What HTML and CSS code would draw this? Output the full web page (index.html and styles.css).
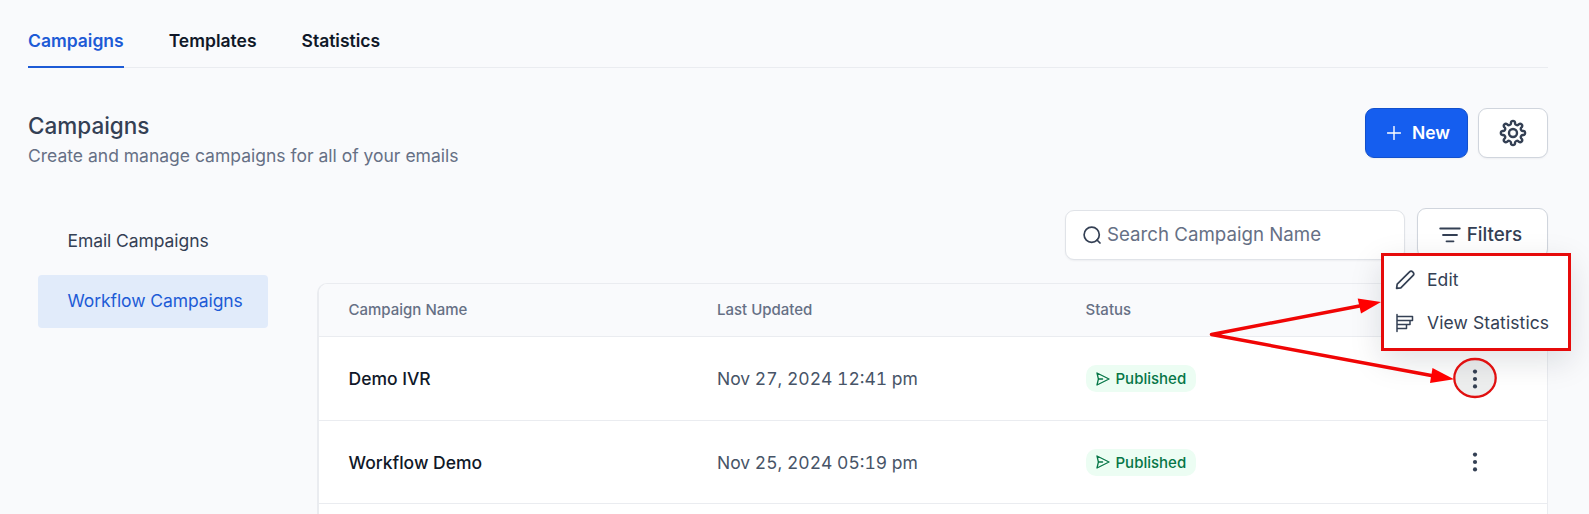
FILE: index.html
```html
<!DOCTYPE html>
<html lang="en">

<head>
    <meta charset="utf-8">
    <meta name="viewport" content="width=device-width, initial-scale=1.0">
    <title>Campaigns</title>
    <link rel="stylesheet" href="styles.css">
</head>

<body>
    <main>
        <nav class="tabs">
            <a class="tab active">Campaigns</a>
            <a class="tab">Templates</a>
            <a class="tab">Statistics</a>
        </nav>

        <header class="page-header">
            <div>
                <h1>Campaigns</h1>
                <p class="subtitle">Create and manage campaigns for all of your emails</p>
            </div>
            <div class="actions">
                <button class="btn btn-new">
                    <svg width="14" height="14" viewBox="0 0 14 14"><path d="M7 .5v13M.5 7h13" stroke-width="1.4" /></svg>
                    <span>New</span>
                </button>
                <button class="btn btn-settings">
                    <svg width="30" height="30" viewBox="-15 -15 30 30" stroke-width="2.4"><path d="M10.400-2.070A2.100 2.100 0 0 1 10.400 2.070A2.100 2.100 0 0 0 8.810 5.890A2.100 2.100 0 0 1 5.890 8.810A2.100 2.100 0 0 0 2.070 10.400A2.100 2.100 0 0 1-2.070 10.400A2.100 2.100 0 0 0-5.890 8.810A2.100 2.100 0 0 1-8.810 5.890A2.100 2.100 0 0 0-10.400 2.070A2.100 2.100 0 0 1-10.400-2.070A2.100 2.100 0 0 0-8.810-5.890A2.100 2.100 0 0 1-5.890-8.810A2.100 2.100 0 0 0-2.070-10.400A2.100 2.100 0 0 1 2.070-10.400A2.100 2.100 0 0 0 5.890-8.810A2.100 2.100 0 0 1 8.810-5.890A2.100 2.100 0 0 0 10.400-2.070z" /><circle r="4" /></svg>
                </button>
            </div>
        </header>

        <div class="content">
            <aside class="sidebar">
                <a class="side-link">Email Campaigns</a>
                <a class="side-link selected">Workflow Campaigns</a>
            </aside>

            <section class="list">
                <div class="toolbar">
                    <div class="search">
                        <svg width="18" height="18" viewBox="0 0 18 18" stroke-width="1.7"><circle cx="8.7" cy="8.7" r="7.6" /><path d="M14 14l3 3" /></svg>
                        <span>Search Campaign Name</span>
                    </div>
                    <button class="btn btn-filters">
                        <svg width="22" height="16" viewBox="0 0 22 16" stroke-width="1.8"><path d="M1.200 1.500h19.600M4 8h14M7.500 14.300h7" /></svg>
                        <span>Filters</span>
                    </button>
                </div>

                <div class="table">
                    <div class="row head">
                        <div>Campaign Name</div>
                        <div>Last Updated</div>
                        <div>Status</div>
                        <div></div>
                    </div>
                    <div class="row">
                        <div class="name">Demo IVR</div>
                        <div class="date">Nov 27, 2024 12:41 pm</div>
                        <div>
                            <span class="badge">
                                <svg width="14" height="14" viewBox="0 0 14 14" stroke-width="1.3"><path d="M1 1l12 6-12 6 1.400-6zM2.400 7h4.200" /></svg>
                                Published
                            </span>
                        </div>
                        <div class="more">
                            <svg width="6" height="20" viewBox="0 0 6 20"><circle cx="3" cy="2.6" r="2.1" /><circle cx="3" cy="10" r="2.1" /><circle cx="3" cy="17.4" r="2.1" /></svg>
                        </div>
                    </div>
                    <div class="row">
                        <div class="name">Workflow Demo</div>
                        <div class="date">Nov 25, 2024 05:19 pm</div>
                        <div>
                            <span class="badge">
                                <svg width="14" height="14" viewBox="0 0 14 14" stroke-width="1.3"><path d="M1 1l12 6-12 6 1.400-6zM2.400 7h4.200" /></svg>
                                Published
                            </span>
                        </div>
                        <div class="more">
                            <svg width="6" height="20" viewBox="0 0 6 20"><circle cx="3" cy="2.6" r="2.1" /><circle cx="3" cy="10" r="2.1" /><circle cx="3" cy="17.4" r="2.1" /></svg>
                        </div>
                    </div>
                </div>
            </section>
        </div>
    </main>

    <div class="menu">
        <a class="menu-item">
            <svg width="20" height="20" viewBox="0 0 20 20" stroke-width="1.7"><path d="M1.600 18.400l.6-4.200L14.300 2.100a2.500 2.500 0 0 1 3.600 3.600L5.800 17.800z" /></svg>
            <span>Edit</span>
        </a>
        <a class="menu-item">
            <svg width="20" height="20" viewBox="0 0 20 20" stroke-width="1.5"><path d="M2 1.500v17M2 3.500h15.500v4H2M15 7.500v4H2M11.500 11.500v4H2" /></svg>
            <span>View Statistics</span>
        </a>
    </div>

    <!-- arrows and ring over the page -->
    <svg class="marks" width="1589" height="514" viewBox="0 0 1589 514">
        <path class="line" d="M1362 305.500L1211.500 334.500L1434 376" />
        <path class="tip" d="M1357.700 298.500L1381 302L1361 313.500z" />
        <path class="tip" d="M1432.500 368L1454 379.300L1430 383z" />
        <ellipse class="ring" cx="1475" cy="378" rx="20.700" ry="19" />
    </svg>
</body>

</html>
```
FILE: styles.css
```css
* {
    box-sizing: border-box;
}

body {
    margin: 0;
    height: 514px;
    overflow: hidden;
    position: relative;
    background-color: #f9fafc;
    font-family: Inter, "Liberation Sans", sans-serif;
    font-size: 17.5px;
    color: #344054;
}

svg {
    display: block;
    flex: none;
    fill: none;
    stroke: currentColor;
    stroke-linecap: round;
    stroke-linejoin: round;
}

main {
    display: flex;
    flex-direction: column;
    height: 514px;
    padding: 0 41px 0 28px;
}

.tabs {
    display: flex;
    flex: none;
    gap: 45px;
    height: 68px;
    box-shadow: inset 0 -1px #eaecf0;
}

.tab {
    padding-top: 30px;
    line-height: 22px;
    font-weight: 600;
    color: #101828;
}

.tab.active {
    color: #1d5bd6;
    border-bottom: 2px solid #1d5bd6;
}

.page-header {
    display: flex;
    flex: none;
    justify-content: space-between;
    padding-top: 40px;
    height: 140px;
}

h1 {
    margin: 4px 0 0;
    font-size: 22.5px;
    line-height: 28px;
    font-weight: 500;
    color: #344054;
}

.subtitle {
    margin: 4px 0 0;
    line-height: 24px;
    color: #667085;
}

.actions {
    display: flex;
    gap: 10px;
}

.btn {
    display: flex;
    align-items: center;
    justify-content: center;
    height: 50px;
    padding: 0;
    border: 1px solid #d0d5dd;
    border-radius: 9px;
    background-color: #fff;
    box-shadow: 0 1px 2px rgba(16, 24, 40, .05);
    font: 500 17.5px Inter, sans-serif;
    color: #344054;
}

.btn-new {
    width: 103px;
    gap: 11px;
    padding: 0 0 1px 4px;
    background-color: #155eef;
    border-color: #1250cc;
    font-weight: 600;
    color: #fff;
}

.btn-settings {
    width: 70px;
}

.content {
    display: flex;
    flex: 1;
    min-height: 0;
}

.sidebar {
    width: 289px;
    padding: 7px 0 0 10px;
}

.side-link {
    display: block;
    width: 230px;
    height: 53px;
    margin-bottom: 7px;
    padding-left: 29.5px;
    line-height: 52px;
    letter-spacing: -.08px;
    border-radius: 4px;
}

.side-link.selected {
    background-color: #e1ebfa;
    color: #1d5bd6;
}

.list {
    display: flex;
    flex-direction: column;
    width: 1231px;
}

.toolbar {
    display: flex;
    flex: none;
    justify-content: flex-end;
    gap: 12px;
    height: 75px;
}

.search {
    display: flex;
    align-items: center;
    gap: 6px;
    width: 340px;
    height: 50px;
    margin-top: 2px;
    padding: 0 0 1px 17px;
    border: 1px solid #e0e3e8;
    border-radius: 9px;
    background-color: #fff;
    box-shadow: 0 1px 2px rgba(16, 24, 40, .05);
    font-size: 18.7px;
}

.search span {
    color: #667085;
}

.btn-filters {
    width: 131px;
    gap: 6px;
    padding: 3px 4px 0 0;
    font-size: 18.8px;
}

.table {
    flex: 1;
    border: 1px solid #eaecf0;
    border-left-width: 2px;
    border-bottom: 0;
    border-radius: 10px 10px 0 0;
    background-color: #fff;
    overflow: hidden;
}

.row {
    display: grid;
    grid-template-columns: 368.5px 368.5px 368.5px 1fr;
    align-items: center;
    height: 83.5px;
    padding: 1px 0 0 29.5px;
    border-bottom: 1px solid #eaecf0;
}

.row.head {
    height: 53px;
    padding-top: 0;
    padding-bottom: 1px;
    background-color: #f9fafc;
    font-size: 15px;
    font-weight: 500;
    color: #667085;
}

.name {
    font-weight: 500;
    color: #101828;
}

.date {
    font-variant-numeric: tabular-nums;
    color: #475467;
}

.badge {
    display: inline-flex;
    align-items: center;
    gap: 6px;
    height: 27px;
    padding: 0 10px;
    border-radius: 10px;
    background-color: #ecfdf3;
    font-size: 15px;
    font-weight: 500;
    color: #067647;
}

.more {
    padding-left: 17.5px;
}

.more svg {
    fill: #344054;
    stroke: none;
}

.menu {
    position: absolute;
    left: 1381px;
    top: 253px;
    width: 190px;
    height: 98px;
    padding: 2px 11px;
    border: 3px solid #e60b0b;
    background-color: #fff;
    box-shadow: 0 10px 30px rgba(16, 24, 40, .13);
}

.menu-item {
    display: flex;
    align-items: center;
    gap: 12px;
    height: 43px;
    letter-spacing: .1px;
    white-space: nowrap;
}

.marks {
    position: absolute;
    left: 0;
    top: 0;
}

.line {
    stroke: #f00505;
    stroke-width: 3.5;
}

.tip {
    fill: #f00;
    stroke: none;
}

.ring {
    fill: rgba(52, 64, 64, .09);
    stroke: #e01010;
    stroke-width: 2.3;
}
```
